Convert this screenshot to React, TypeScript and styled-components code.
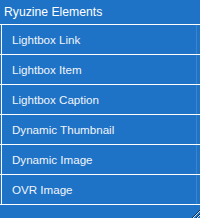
import React from "react";
import styled, { createGlobalStyle } from "styled-components";

const Global = createGlobalStyle`
  html, body { margin: 0; padding: 0; background: #1e73c6; }
  #root { width: 200px; height: 218px; }
`;

const Panel = styled.div`
  width: 200px;
  height: 218px;
  background: #1e73c6;
  display: flex;
  flex-direction: column;
  box-sizing: border-box;
`;

const Header = styled.div`
  height: 24px;
  display: flex;
  align-items: center;
  padding-left: 4px;
  font-family: "Liberation Sans", Arial, sans-serif;
  font-size: 12.2px;
  color: #ffffff;
`;

const List = styled.div`
  display: flex;
  flex-direction: column;
  border-bottom: 1px solid #ffffff;
`;

const Row = styled.div`
  border-top: 1px solid #ffffff;
  padding-left: 1px;
  padding-right: 3px;
  height: 29px;
  display: flex;
`;

const RowInner = styled.div`
  flex: 1;
  border-left: 1px solid #ffffff;
  border-right: 1px solid rgba(255, 255, 255, 0.12);
  display: flex;
  align-items: center;
  padding-left: 10px;
  font-family: "Liberation Sans", Tahoma, sans-serif;
  font-size: 11.6px;
  color: #f2f5fa;
`;

const Footer = styled.div`
  flex: 1;
  display: flex;
  justify-content: flex-end;
  align-items: flex-end;
`;

const Grip = styled.svg`
  display: block;
  width: 9px;
  height: 9px;
`;

const items = [
  "Lightbox Link",
  "Lightbox Item",
  "Lightbox Caption",
  "Dynamic Thumbnail",
  "Dynamic Image",
  "OVR Image",
];

export default function App() {
  return (
    <>
      <Global />
      <Panel>
        <Header>Ryuzine Elements</Header>
        <List>
          {items.map((t) => (
            <Row key={t}>
              <RowInner>{t}</RowInner>
            </Row>
          ))}
        </List>
        <Footer>
          <Grip viewBox="0 0 9 9">
            <line x1="1" y1="9" x2="9" y2="1" stroke="#0d2f55" strokeWidth="1" />
            <line x1="2" y1="9" x2="9" y2="2" stroke="#cfe0f2" strokeWidth="1" />
            <line x1="5" y1="9" x2="9" y2="5" stroke="#0d2f55" strokeWidth="1" />
            <line x1="6" y1="9" x2="9" y2="6" stroke="#cfe0f2" strokeWidth="1" />
          </Grip>
        </Footer>
      </Panel>
    </>
  );
}
